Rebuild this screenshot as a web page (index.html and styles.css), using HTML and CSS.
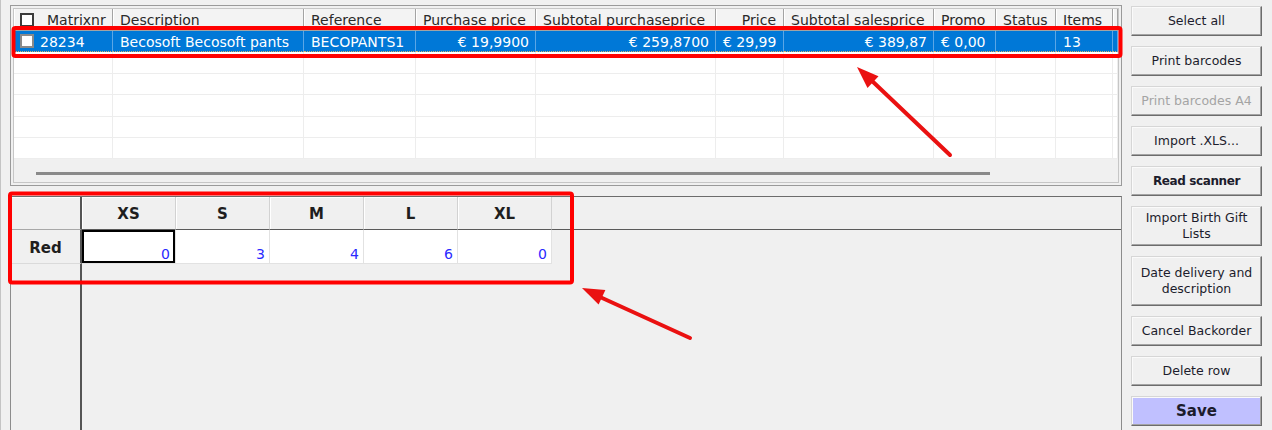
FILE: index.html
```html
<!DOCTYPE html>
<html>
<head>
<meta charset="utf-8">
<link rel="stylesheet" href="styles.css">
</head>
<body>
<div class="app">
  <div class="main">
    <div class="top-panel">
      <div class="grid">
        <div class="cols head">
          <div class="hc first"><span class="chk chk-head"></span><span>Matrixnr</span></div>
          <div class="hc">Description</div>
          <div class="hc">Reference</div>
          <div class="hc">Purchase price</div>
          <div class="hc">Subtotal purchaseprice</div>
          <div class="hc right">Price</div>
          <div class="hc">Subtotal salesprice</div>
          <div class="hc">Promo</div>
          <div class="hc">Status</div>
          <div class="hc">Items</div>
          <div class="hc filler"></div>
        </div>
        <div class="rows">
          <div class="cols row sel">
            <div class="c first"><span class="chk chk-row"></span><span class="focus">28234</span></div>
            <div class="c">Becosoft Becosoft pants</div>
            <div class="c">BECOPANTS1</div>
            <div class="c right">€ 19,9900</div>
            <div class="c right">€ 259,8700</div>
            <div class="c">€ 29,99</div>
            <div class="c right">€ 389,87</div>
            <div class="c">€ 0,00</div>
            <div class="c"></div>
            <div class="c">13</div>
            <div class="c filler"></div>
          </div>
          <div class="cols row"><div class="c"></div><div class="c"></div><div class="c"></div><div class="c"></div><div class="c"></div><div class="c"></div><div class="c"></div><div class="c"></div><div class="c"></div><div class="c"></div><div class="c filler"></div></div>
          <div class="cols row"><div class="c"></div><div class="c"></div><div class="c"></div><div class="c"></div><div class="c"></div><div class="c"></div><div class="c"></div><div class="c"></div><div class="c"></div><div class="c"></div><div class="c filler"></div></div>
          <div class="cols row"><div class="c"></div><div class="c"></div><div class="c"></div><div class="c"></div><div class="c"></div><div class="c"></div><div class="c"></div><div class="c"></div><div class="c"></div><div class="c"></div><div class="c filler"></div></div>
          <div class="cols row"><div class="c"></div><div class="c"></div><div class="c"></div><div class="c"></div><div class="c"></div><div class="c"></div><div class="c"></div><div class="c"></div><div class="c"></div><div class="c"></div><div class="c filler"></div></div>
          <div class="cols row"><div class="c"></div><div class="c"></div><div class="c"></div><div class="c"></div><div class="c"></div><div class="c"></div><div class="c"></div><div class="c"></div><div class="c"></div><div class="c"></div><div class="c filler"></div></div>
        </div>
        <div class="hscroll"><div class="thumb"></div></div>
      </div>
    </div>
    <div class="bottom-panel">
      <div class="sizes">
        <div class="corner"></div>
        <div class="sh">XS</div>
        <div class="sh">S</div>
        <div class="sh">M</div>
        <div class="sh">L</div>
        <div class="sh">XL</div>
        <div class="sh-fill"></div>
        <div class="rh">Red</div>
        <div class="v focused">0</div>
        <div class="v">3</div>
        <div class="v">4</div>
        <div class="v">6</div>
        <div class="v">0</div>
        <div class="v-fill"></div>
        <div class="rh-rest"></div>
        <div class="rest"></div>
      </div>
    </div>
  </div>
  <div class="buttons">
    <div class="btn">Select all</div>
    <div class="btn">Print barcodes</div>
    <div class="btn disabled">Print barcodes A4</div>
    <div class="btn">Import .XLS...</div>
    <div class="btn bold">Read scanner</div>
    <div class="btn h40">Import Birth Gift<br>Lists</div>
    <div class="btn h50">Date delivery and<br>description</div>
    <div class="btn">Cancel Backorder</div>
    <div class="btn">Delete row</div>
    <div class="btn save">Save</div>
  </div>
</div>
<svg class="annot" width="1272" height="430" viewBox="0 0 1272 430">
  <rect x="13.5" y="28" width="1107" height="28" rx="2" fill="none" stroke="#ff0000" stroke-width="4"/>
  <rect x="10" y="193.5" width="562" height="89" rx="2" fill="none" stroke="#ff0000" stroke-width="4"/>
  <line x1="950" y1="155" x2="870" y2="79" stroke="#ea1111" stroke-width="4" stroke-linecap="round"/>
  <polygon points="857,67 878.5,76.3 867.5,87.9" fill="#ea1111"/>
  <line x1="690" y1="338" x2="600" y2="297" stroke="#ea1111" stroke-width="4" stroke-linecap="round"/>
  <polygon points="582,288 605.4,289.9 598.6,304.5" fill="#ea1111"/>
</svg>
</body>
</html>
```
FILE: styles.css
```css
html, body {
  margin: 0;
  padding: 0;
}
body {
  width: 1272px;
  height: 430px;
  overflow: hidden;
  position: relative;
  background: #f0f0f0;
  font-family: "DejaVu Sans", "Noto Sans", sans-serif;
  font-size: 14px;
  color: #1e1e1e;
  box-shadow: inset 1px 0 0 #c4c4c4;
}
.app {
  display: flex;
  gap: 9px;
  padding: 5px 10px 0 10px;
  height: 430px;
  box-sizing: border-box;
}
.main {
  width: 1112px;
  display: flex;
  flex-direction: column;
  gap: 10px;
}

/* top grid */
.top-panel {
  height: 181px;
  box-sizing: border-box;
  border: 1px solid #9a9a9a;
  padding: 2px;
}
.grid {
  height: 100%;
  box-sizing: border-box;
  border: 1px solid #c6c6c6;
  background: #f0f0f0;
  display: flex;
  flex-direction: column;
}
.cols {
  display: grid;
  grid-template-columns: 99px 191px 112px 120px 180px 68px 150px 62px 60px 57px 1fr;
}
.head {
  height: 22px;
}
.hc {
  box-sizing: border-box;
  background: #f3f3f3;
  border-right: 1px solid #a3a3a3;
  border-bottom: 1px solid #a3a3a3;
  box-shadow: inset 1px 0 0 #ffffff;
  padding: 1px 7px 0 7px;
  line-height: 21px;
  white-space: nowrap;
  overflow: hidden;
  color: #2a2a2a;
}
.hc.first {
  display: flex;
  align-items: center;
  padding: 0 0 0 6px;
  gap: 13px;
}
.hc.first span:last-child {
  padding-top: 2px;
}
.hc.right, .c.right {
  text-align: right;
}
.hc.filler {
  padding: 0;
}
.chk {
  display: inline-block;
  width: 14px;
  height: 14px;
  box-sizing: border-box;
  background: #fff;
  flex: none;
}
.chk-head {
  border: 2px solid #3c3c3c;
}
.chk-row {
  border: 2px solid #8a8a8a;
}
.rows {
  background: #fff;
}
.row {
  height: 21.4px;
}
.c {
  box-sizing: border-box;
  background: #fff;
  border-right: 1px solid #ededed;
  border-bottom: 1px solid #ededed;
  padding: 1px 6px 0 7px;
  line-height: 20px;
  white-space: nowrap;
  overflow: hidden;
}
.c.filler {
  padding: 0;
}
.row.sel .c {
  background: #0078d7;
  color: #ffffff;
  border-right: 1px solid #5aa6e6;
  border-bottom: 1px dotted #d9b36a;
}
.row.sel .c.first {
  display: flex;
  align-items: center;
  padding: 0 0 0 6px;
  gap: 6px;
}
.focus {
  line-height: 20px;
  padding-top: 2px;
}
.hscroll {
  flex: 1;
  padding: 12px 0 0 22px;
  border-top: 1px solid #f0f0f0;
}
.thumb {
  width: 954px;
  height: 3px;
  background: #8a8a8a;
}

/* bottom size grid */
.bottom-panel {
  flex: 1;
  border: 1px solid #8c8c8c;
  border-top-color: #6c6c6c;
  border-bottom: none;
}
.sizes {
  height: 100%;
  display: grid;
  grid-template-columns: 71px 94px 94px 94px 94px 94px 1fr;
  grid-template-rows: 33px 34px 1fr;
}
.corner {
  box-sizing: border-box;
  background: #f0f0f0;
  border-right: 2px solid #555555;
  border-bottom: 1px solid #a8a8a8;
  box-shadow: inset 0 1px 0 #fff;
}
.sh {
  box-sizing: border-box;
  background: #f0f0f0;
  border-right: 1px solid #d2d2d2;
  border-bottom: 1px solid #5a5a5a;
  box-shadow: inset 0 1px 0 #fff, inset 1px 0 0 #fff;
  display: flex;
  align-items: center;
  justify-content: center;
  font-weight: bold;
  font-size: 15px;
  padding-top: 2px;
  color: #1e1e1e;
}
.sh-fill {
  border-bottom: 1px solid #5a5a5a;
}
.rh {
  box-sizing: border-box;
  background: #f0f0f0;
  border-right: 2px solid #555555;
  border-bottom: 1px solid #dadada;
  display: flex;
  align-items: center;
  justify-content: center;
  font-weight: bold;
  font-size: 15px;
  padding-top: 3px;
}
.v {
  box-sizing: border-box;
  background: #ffffff;
  border-right: 1px solid #e2e2e2;
  border-bottom: 1px solid #e2e2e2;
  display: flex;
  align-items: flex-end;
  justify-content: flex-end;
  padding: 0 4px 1px 0;
  color: #2a2aff;
  font-size: 14px;
}
.v.focused {
  box-shadow: inset 0 0 0 2px #000000;
  padding-right: 5px;
}
.rh-rest {
  border-right: 2px solid #555555;
}
.rest {
  grid-column: 2 / span 6;
}

/* buttons */
.buttons {
  width: 131px;
  display: flex;
  flex-direction: column;
  gap: 10px;
  padding-top: 1px;
}
.btn {
  height: 30px;
  box-sizing: border-box;
  border: 1px solid;
  border-color: #d6d6d6 #6c6c6c #6c6c6c #d6d6d6;
  box-shadow: inset -1px -1px 0 #a4a4a4, inset 1px 1px 0 #fafafa;
  background: #f0f0f0;
  display: flex;
  align-items: center;
  justify-content: center;
  text-align: center;
  font-size: 12.5px;
  line-height: 16px;
  color: #1c1c2c;
  white-space: nowrap;
}
.btn.h40 { height: 40px; }
.btn.h50 { height: 50px; }
.btn.disabled { color: #a4a4a4; }
.btn.bold { font-weight: bold; font-size: 12px; letter-spacing: -0.4px; }
.btn.save {
  background: #c0c0ff;
  font-weight: bold;
  font-size: 15px;
}

/* annotations overlay */
.annot {
  position: absolute;
  left: 0;
  top: 0;
  pointer-events: none;
}
```
